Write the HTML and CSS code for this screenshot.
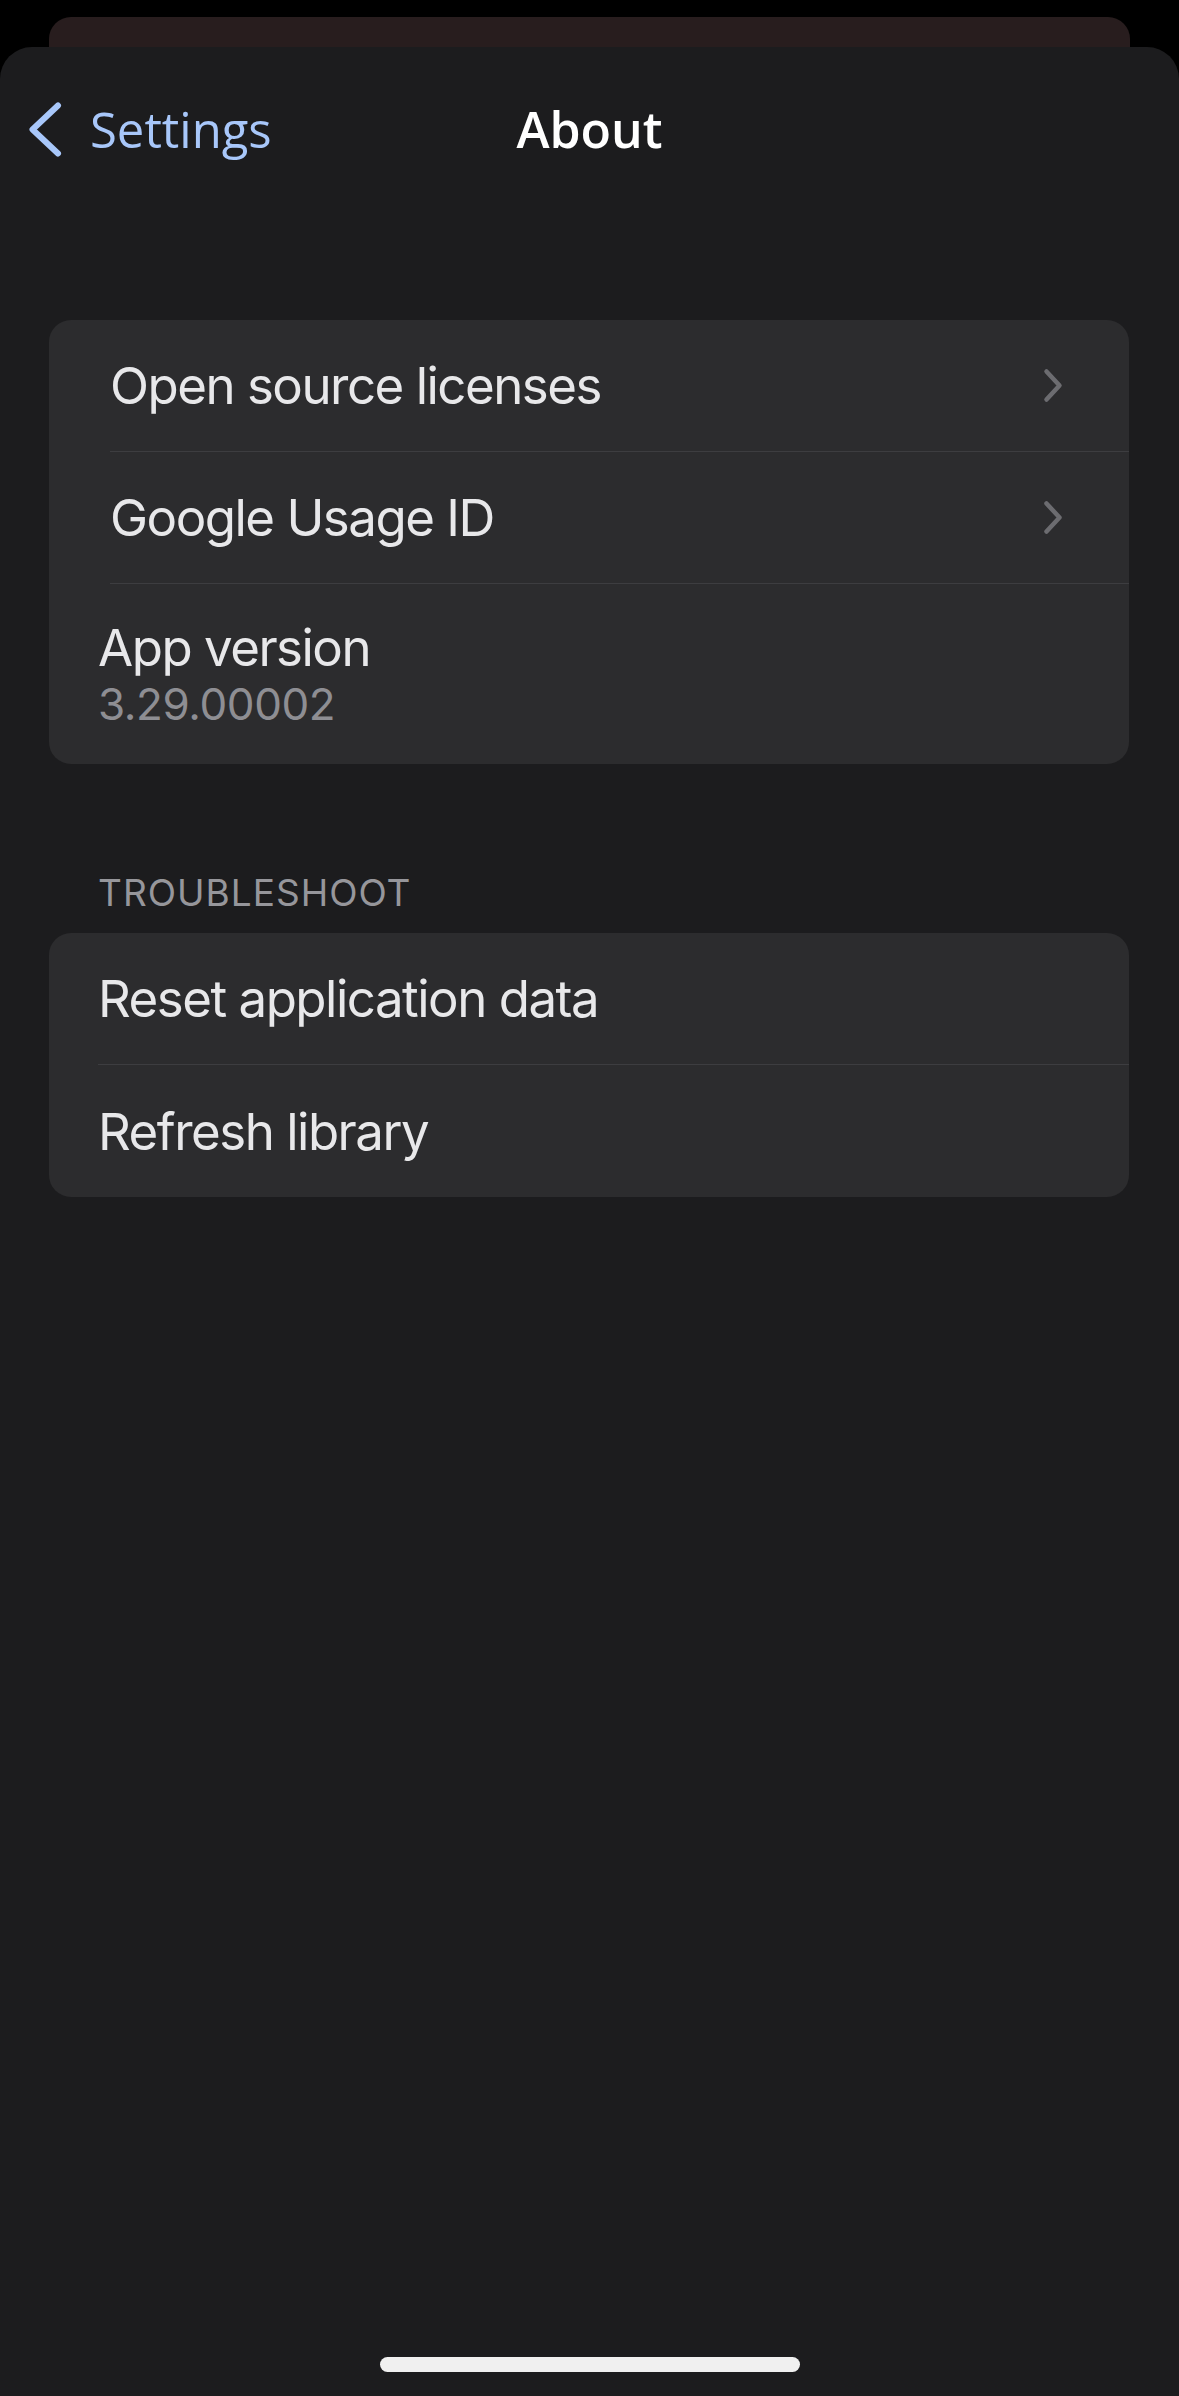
FILE: index.html
```html
<!DOCTYPE html>
<html lang="en">
<head>
<meta charset="utf-8">
<title>About</title>
<link rel="stylesheet" href="styles.css">
</head>
<body>
<div class="back-card"></div>
<main class="sheet">
  <header class="nav">
    <div class="nav-left">
      <svg class="back-chevron" width="34" height="55" viewBox="0 0 34 55" aria-hidden="true">
        <path d="M30 3.5 L4.5 27.5 L30 51.5" fill="none" stroke="#a8c7fa" stroke-width="6" stroke-linecap="round" stroke-linejoin="round"/>
      </svg>
      <span class="back-label">Settings</span>
    </div>
    <h1 class="nav-title">About</h1>
    <div class="nav-right"></div>
  </header>

  <section class="group group--first">
    <div class="row row--indent">
      <div class="row-inner row-inner--sep">
        <span class="row-label">Open source licenses</span>
        <svg class="chevron" width="20" height="35" viewBox="0 0 20 35" aria-hidden="true">
          <path d="M3.5 3.5 L16.5 17.5 L3.5 31.5" fill="none" stroke="#6c6c70" stroke-width="4.5" stroke-linecap="round" stroke-linejoin="round"/>
        </svg>
      </div>
    </div>
    <div class="row row--indent">
      <div class="row-inner row-inner--sep">
        <span class="row-label">Google Usage ID</span>
        <svg class="chevron" width="20" height="35" viewBox="0 0 20 35" aria-hidden="true">
          <path d="M3.5 3.5 L16.5 17.5 L3.5 31.5" fill="none" stroke="#6c6c70" stroke-width="4.5" stroke-linecap="round" stroke-linejoin="round"/>
        </svg>
      </div>
    </div>
    <div class="row row--stack">
      <span class="row-label">App version</span>
      <span class="row-sub">3.29.00002</span>
    </div>
  </section>

  <h2 class="group-header">TROUBLESHOOT</h2>
  <section class="group">
    <div class="row">
      <div class="row-inner row-inner--sep">
        <span class="row-label">Reset application data</span>
      </div>
    </div>
    <div class="row">
      <div class="row-inner">
        <span class="row-label">Refresh library</span>
      </div>
    </div>
  </section>

  <div class="home-indicator"></div>
</main>
</body>
</html>
```

FILE: styles.css
```css
* {
  box-sizing: border-box;
}

html, body {
  margin: 0;
  padding: 0;
  background: #000;
}

body {
  width: 1179px;
  height: 2396px;
  overflow: hidden;
  font-family: Inter, "Liberation Sans", sans-serif;
  -webkit-font-smoothing: antialiased;
}

.back-card {
  height: 30px;
  margin: 17px 49px 0;
  background: #281d1e;
  border-radius: 22px 22px 0 0;
}

.sheet {
  height: 2349px;
  background: #1c1c1e;
  border-radius: 32px 32px 0 0;
  display: flex;
  flex-direction: column;
}

.nav {
  display: grid;
  grid-template-columns: 1fr auto 1fr;
  align-items: center;
  height: 66px;
  margin-top: 49px;
  padding: 0 28px;
}

.nav-left {
  display: flex;
  align-items: center;
  gap: 28px;
}

.back-chevron {
  display: block;
  flex: none;
}

.back-label {
  font-family: "Open Sans", "Liberation Sans", sans-serif;
  font-size: 49px;
  line-height: 66px;
  color: #a8c7fa;
}

.nav-title {
  margin: 0;
  font-family: "Open Sans", "Liberation Sans", sans-serif;
  font-size: 50px;
  line-height: 66px;
  font-weight: 600;
  color: #ffffff;
}

.group {
  margin: 0 50px 0 49px;
  background: #2c2c2e;
  border-radius: 22px;
  overflow: hidden;
}

.group--first {
  margin-top: 158px;
}

.row {
  padding-left: 49px;
}

.row--indent {
  padding-left: 61px;
}

.row-inner {
  display: flex;
  align-items: center;
  justify-content: space-between;
  height: 132px;
  padding-right: 66px;
}

.row-inner--sep {
  border-bottom: 1.5px solid #3d3d40;
}

.row-label {
  font-size: 51px;
  line-height: 61px;
  letter-spacing: -1.5px;
  color: #e8e8ea;
}

.chevron {
  display: block;
  flex: none;
}

.row--stack {
  display: flex;
  flex-direction: column;
  padding-top: 33px;
  padding-bottom: 33px;
}

.row-sub {
  font-size: 44px;
  line-height: 53px;
  letter-spacing: -0.4px;
  color: #8e8e93;
}

.group-header {
  margin: 106px 0 18px 98px;
  font-size: 37px;
  line-height: 45px;
  font-weight: 400;
  letter-spacing: 1px;
  color: #96969b;
}

.home-indicator {
  width: 420px;
  height: 15px;
  margin: auto auto 24px;
  background: #f0f0f0;
  border-radius: 8px;
}
```
